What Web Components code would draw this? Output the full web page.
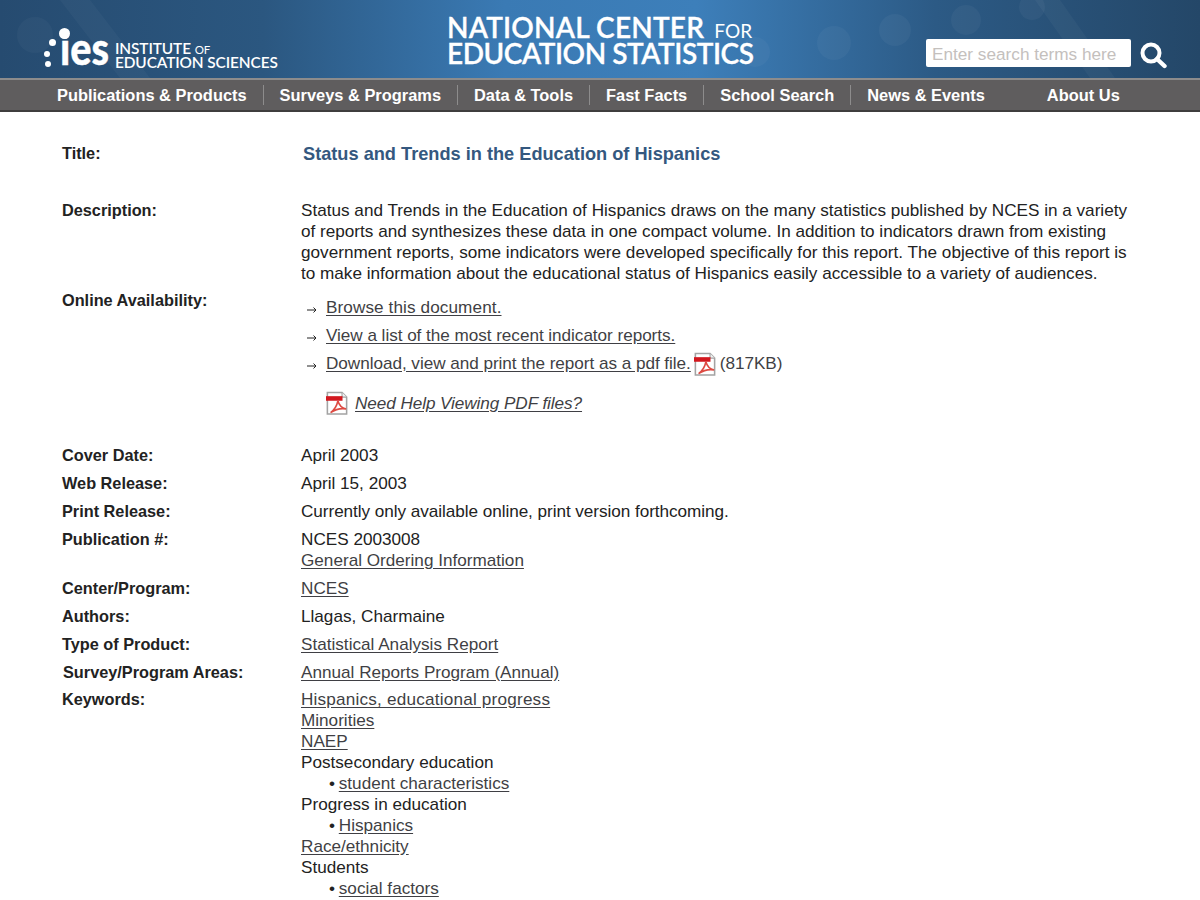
<!DOCTYPE html>
<html lang="en">
<head>
<meta charset="utf-8">
<title>Status and Trends in the Education of Hispanics</title>
<style>
  html, body { margin: 0; padding: 0; background: #fff; }
  body { font: 17.15px/21px "Liberation Sans", Arial, sans-serif; color: #222; }
</style>
</head>
<body>
<site-header></site-header>
<site-nav></site-nav>
<pub-record>
  <pub-row label="Title:" class="title"><pub-title>Status and Trends in the Education of Hispanics</pub-title></pub-row>
  <pub-row label="Description:" class="desc">Status and Trends in the Education of Hispanics draws on the many statistics published by NCES in a variety of reports and synthesizes these data in one compact volume. In addition to indicators drawn from existing government reports, some indicators were developed specifically for this report. The objective of this report is to make information about the educational status of Hispanics easily accessible to a variety of audiences.</pub-row>
  <pub-row label="Online Availability:" class="online">
    <arrow-link style="letter-spacing:.1px">Browse this document.</arrow-link>
    <arrow-link style="letter-spacing:-.04px">View a list of the most recent indicator reports.</arrow-link>
    <arrow-link style="letter-spacing:-.04px" pdf note="(817KB)">Download, view and print the report as a pdf file.</arrow-link>
    <pdf-help style="letter-spacing:-.07px">Need Help Viewing PDF files?</pdf-help>
  </pub-row>
  <pub-row label="Cover Date:">April 2003</pub-row>
  <pub-row label="Web Release:">April 15, 2003</pub-row>
  <pub-row label="Print Release:"><span style="letter-spacing:-.05px">Currently only available online, print version forthcoming.</span></pub-row>
  <pub-row label="Publication #:">NCES 2003008<br><text-link>General Ordering Information</text-link></pub-row>
  <pub-row label="Center/Program:"><text-link>NCES</text-link></pub-row>
  <pub-row label="Authors:">Llagas, Charmaine</pub-row>
  <pub-row label="Type of Product:"><text-link>Statistical Analysis Report</text-link></pub-row>
  <pub-row label="Survey/Program Areas:" nudge><text-link>Annual Reports Program (Annual)</text-link></pub-row>
  <pub-row label="Keywords:" class="keys">
    <text-link style="letter-spacing:.2px">Hispanics, educational progress</text-link><br>
    <text-link>Minorities</text-link><br>
    <text-link>NAEP</text-link><br>
    Postsecondary education<br>
    <sub-key><text-link>student characteristics</text-link></sub-key>
    Progress in education<br>
    <sub-key><text-link>Hispanics</text-link></sub-key>
    <text-link>Race/ethnicity</text-link><br>
    Students<br>
    <sub-key><text-link>social factors</text-link></sub-key>
  </pub-row>
</pub-record>

<script>
const pdfIcon = `
<svg class="pdf" width="22" height="25" viewBox="0 0 24 26" aria-hidden="true">
  <path d="M1.5 1h16l5 5v18.500h-21z" fill="#fff" stroke="#a3a3a3" stroke-width="1.7"/>
  <path d="M17.500 1v5h5" fill="#f2f2f2" stroke="#a3a3a3" stroke-width="1.2"/>
  <rect x="0" y="5" width="18" height="5" fill="#d2181f"/>
  <path d="M5 23c4-3 7-8 8-13 1 4 4 8 9 9-5-1-11 0-17 4z" fill="none" stroke="#dd4a42" stroke-width="1.7"/>
</svg>`;

class SiteHeader extends HTMLElement {
  constructor() {
    super();
    this.attachShadow({ mode: "open" }).innerHTML = `
    <style>
      :host { display: block; height: 78px; position: relative; overflow: hidden;
        background: linear-gradient(90deg, #264b70 0, #2b5780 22%, #3a7ab4 42%, #3d7fba 58%, #2c5a85 78%, #244768 100%); color: #fff; }
      .bg { position: absolute; inset: 0; }
      .wrap { position: relative; display: flex; height: 100%; }
      .logo { display: flex; width: 405px; padding: 28px 0 0 44px; box-sizing: border-box; }
      .dots { position: relative; width: 16px; height: 40px; }
      .dots i { position: absolute; background: #fff; border-radius: 50%; }
      .ies { position: relative; width: 55px; height: 40px; }
      .ies b { display: block; font: 900 46px/40px Lato, sans-serif; transform: scaleX(.86); transform-origin: 0 0; -webkit-text-stroke: .4px #fff; }
      .ies i { position: absolute; left: -1px; top: 0; width: 11px; height: 11px; border-radius: 50%; background: #fff; }
      .inst { font: 600 15.4px/13px Lato, sans-serif; margin-top: 14px; white-space: nowrap; letter-spacing: -.1px; }
      .inst small { font-weight: 400; font-size: 11.500px; }
      .ttl { font: 600 28px/26px Lato, sans-serif; padding: 14px 0 0 42px; width: 521px; box-sizing: border-box; white-space: nowrap; -webkit-text-stroke: .3px #fff; }
      .ttl span { display: block; height: 26px; }
      .ttl .a { letter-spacing: .2px; }
      .ttl .b { letter-spacing: -.45px; }
      .ttl small { font-weight: 400; font-size: 19px; margin-left: 3px; letter-spacing: 0; -webkit-text-stroke: 0; }
      .search { display: flex; gap: 8px; padding-top: 39px; }
      .search svg { margin-top: 2px; }
      .box { width: 205px; height: 28px; box-sizing: border-box; background: #fff; border-radius: 2px; padding: 5px 6px; font: 17.2px/20px "Liberation Sans", sans-serif; color: #c4c0bd; white-space: nowrap; }
    </style>
    <svg class="bg" width="1200" height="78" aria-hidden="true" fill="#fff" stroke="none">
      <path d="M60 0h30l60 78h-30z" opacity=".03"/>
      <path d="M1035 0h25l55 78h-25z" opacity=".035"/>
      <circle cx="834" cy="43" r="17" opacity=".035"/>
      <circle cx="895" cy="30" r="16" opacity=".04"/>
      <circle cx="966" cy="20" r="15" opacity=".04"/>
      <circle cx="1032" cy="7" r="13" opacity=".04"/>
      <circle cx="755" cy="52" r="15" opacity=".035"/>
      <circle cx="35" cy="35" r="18" opacity=".03"/>
    </svg>
    <div class="wrap">
      <div class="logo">
        <div class="dots">
          <i style="left:5px;top:11px;width:7px;height:7px"></i>
          <i style="left:0;top:23px;width:6px;height:6px"></i>
          <i style="left:1px;top:33px;width:6px;height:6px"></i>
        </div>
        <div class="ies"><b>ies</b><i></i></div>
        <div class="inst">INSTITUTE <small>OF</small><br>EDUCATION SCIENCES</div>
      </div>
      <div class="ttl"><span class="a">NATIONAL CENTER <small>FOR</small></span><span class="b">EDUCATION STATISTICS</span></div>
      <div class="search">
        <div class="box">Enter search terms here</div>
        <svg width="28" height="28" viewBox="0 0 28 28" aria-hidden="true">
          <circle cx="12" cy="12" r="8.500" fill="none" stroke="#fff" stroke-width="4"/>
          <path d="M18 18l7.500 7" stroke="#fff" stroke-width="4.400" stroke-linecap="round"/>
        </svg>
      </div>
    </div>`;
  }
}

class SiteNav extends HTMLElement {
  constructor() {
    super();
    const items = ["Publications & Products", "Surveys & Programs", "Data & Tools", "Fast Facts", "School Search", "News & Events"];
    this.attachShadow({ mode: "open" }).innerHTML = `
    <style>
      :host { display: block; height: 34px; box-sizing: border-box; background: #5f5d5e; border-top: 2px solid #8d8c8c; border-bottom: 2px solid #3f3e3e; }
      nav { display: flex; align-items: center; height: 30px; padding: 0 0 0 41px; box-sizing: border-box; font: bold 16.42px/20px "Liberation Sans", sans-serif; color: #fff; }
      a { padding: 0 16px; white-space: nowrap; color: inherit; border-right: 1px solid #8d8c8c; }
      a.last { border: 0; }
      a.about { border: 0; margin-left: 30px; }
    </style>
    <nav>
      ${items.map((t, i) => `<a class="${i == items.length - 1 ? "last" : ""}">${t.replace("&", "&amp;")}</a>`).join("")}
      <a class="about">About Us</a>
    </nav>`;
  }
}

class PubRecord extends HTMLElement {
  constructor() {
    super();
    this.attachShadow({ mode: "open" }).innerHTML = `
    <style>
      :host { display: block; padding: 31px 64px 0 62px; }
      div { display: flex; flex-direction: column; gap: 7px; }
    </style>
    <div><slot></slot></div>`;
  }
}

class PubRow extends HTMLElement {
  constructor() {
    super();
    this.attachShadow({ mode: "open" }).innerHTML = `
    <style>
      :host { display: grid; grid-template-columns: 239px 1fr; }
      :host(.title) { margin-bottom: 28px; }
      :host(.desc) { margin-bottom: -1px; }
      :host(.online) { margin-bottom: 22px; }
      :host(.keys) { margin-top: -1px; }
      .l { font-weight: bold; font-size: 16.3px; }
      :host([nudge]) .l { padding-left: 1px; }
      :host(.online) .v { padding-top: 3px; }
    </style>
    <div class="l">${this.getAttribute("label")}</div>
    <div class="v"><slot></slot></div>`;
  }
}

class PubTitle extends HTMLElement {
  constructor() {
    super();
    this.attachShadow({ mode: "open" }).innerHTML = `
    <style>:host { display: block; padding: 1px 0 0 2px; font-weight: bold; color: #34587f; font-size: 18.2px; }</style>
    <slot></slot>`;
  }
}

class TextLink extends HTMLElement {
  constructor() {
    super();
    this.attachShadow({ mode: "open" }).innerHTML = `
    <style>:host { color: #3f3f44; text-decoration: underline; text-underline-offset: 2px; }</style>
    <slot></slot>`;
  }
}

class ArrowLink extends HTMLElement {
  constructor() {
    super();
    const note = this.getAttribute("note");
    this.attachShadow({ mode: "open" }).innerHTML = `
    <style>
      :host { display: flex; align-items: center; height: 28px; }
      svg.arr { margin: 5px 9px 0 6px; flex: none; }
      .pdf { margin: 3px 4px 0 3px; flex: none; }
      .note { color: #3f3f44; }
    </style>
    <svg class="arr" width="10" height="8" viewBox="0 0 10 8" aria-hidden="true"><path d="M0 4h9M6.500 1.500L9 4 6.500 6.500" fill="none" stroke="#222" stroke-width="1"/></svg>
    <text-link><slot></slot></text-link>
    ${note !== null ? pdfIcon + `<span class="note">${note}</span>` : ""}`;
  }
}

class PdfHelp extends HTMLElement {
  constructor() {
    super();
    this.attachShadow({ mode: "open" }).innerHTML = `
    <style>
      :host { display: flex; align-items: center; gap: 7px; padding: 14px 0 0 25px; font-style: italic; }
      svg { flex: none; }
    </style>
    ${pdfIcon}
    <text-link><slot></slot></text-link>`;
  }
}

class SubKey extends HTMLElement {
  constructor() {
    super();
    this.attachShadow({ mode: "open" }).innerHTML = `
    <style>
      :host { display: block; padding-left: 28px; }
      span { margin-right: -1px; }
    </style>
    <span>&bull;</span> <slot></slot>`;
  }
}

customElements.define("site-header", SiteHeader);
customElements.define("site-nav", SiteNav);
customElements.define("pub-record", PubRecord);
customElements.define("pub-row", PubRow);
customElements.define("pub-title", PubTitle);
customElements.define("text-link", TextLink);
customElements.define("arrow-link", ArrowLink);
customElements.define("pdf-help", PdfHelp);
customElements.define("sub-key", SubKey);
</script>
</body>
</html>
